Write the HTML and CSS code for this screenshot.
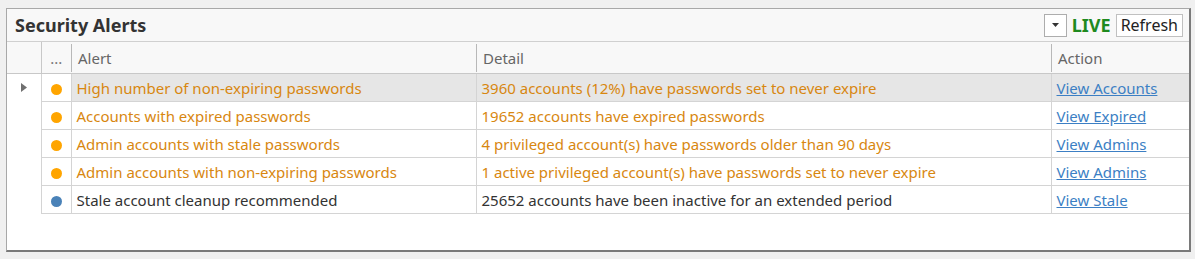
FILE: index.html
```html
<!DOCTYPE html>
<html>
<head>
<meta charset="utf-8">
<link rel="stylesheet" href="styles.css">
</head>
<body>
<div class="panel">
  <div class="titlebar">
    <div class="title">Security Alerts</div>
    <div class="tools">
      <button class="drop"><svg width="7" height="4" viewBox="0 0 7 4"><path d="M0 0H7L3.5 4Z" fill="#333"/></svg></button>
      <span class="live">LIVE</span>
      <button class="refresh">Refresh</button>
    </div>
  </div>
  <table class="grid">
    <colgroup>
      <col class="c-exp"><col class="c-st"><col class="c-alert"><col class="c-detail"><col class="c-action">
    </colgroup>
    <thead>
      <tr>
        <th class="exp"></th>
        <th class="st">...</th>
        <th><div class="th-in">Alert</div></th>
        <th><div class="th-in">Detail</div></th>
        <th><div class="th-in">Action</div></th>
      </tr>
    </thead>
    <tbody>
      <tr class="sel warn">
        <td class="exp"><svg width="6" height="9" viewBox="0 0 6 9"><path d="M0 0L6 4.5L0 9Z" fill="#707070"/></svg></td>
        <td class="st"><span class="dot orange"></span></td>
        <td>High number of non-expiring passwords</td>
        <td>3960 accounts (12%) have passwords set to never expire</td>
        <td><a href="#">View Accounts</a></td>
      </tr>
      <tr class="warn">
        <td class="exp"></td>
        <td class="st"><span class="dot orange"></span></td>
        <td>Accounts with expired passwords</td>
        <td>19652 accounts have expired passwords</td>
        <td><a href="#">View Expired</a></td>
      </tr>
      <tr class="warn">
        <td class="exp"></td>
        <td class="st"><span class="dot orange"></span></td>
        <td>Admin accounts with stale passwords</td>
        <td>4 privileged account(s) have passwords older than 90 days</td>
        <td><a href="#">View Admins</a></td>
      </tr>
      <tr class="warn">
        <td class="exp"></td>
        <td class="st"><span class="dot orange"></span></td>
        <td>Admin accounts with non-expiring passwords</td>
        <td>1 active privileged account(s) have passwords set to never expire</td>
        <td><a href="#">View Admins</a></td>
      </tr>
      <tr class="info">
        <td class="exp"></td>
        <td class="st"><span class="dot blue"></span></td>
        <td>Stale account cleanup recommended</td>
        <td>25652 accounts have been inactive for an extended period</td>
        <td><a href="#">View Stale</a></td>
      </tr>
    </tbody>
  </table>
</div>
</body>
</html>
```
FILE: styles.css
```css
html, body {
  margin: 0;
  padding: 0;
  background: #f0f0f0;
  font-family: "Noto Sans", "Open Sans", sans-serif;
}
.panel {
  margin: 8px 0 0 6px;
  width: 1182px;
  height: 241px;
  background: #fff;
  border-left: 1px solid #a8a8a8;
  border-top: 1px solid #a8a8a8;
  border-right: 2px solid #7a7a7a;
  border-bottom: 2px solid #7a7a7a;
}
.titlebar {
  height: 32px;
  display: flex;
  align-items: center;
  justify-content: space-between;
  padding: 0 6px 0 8px;
  background: #f8f8f8;
}
.title {
  font-weight: bold;
  font-size: 18px;
  color: #333;
}
.tools {
  display: flex;
  align-items: center;
  gap: 5px;
}
.drop {
  width: 23px;
  height: 23px;
  border: 1px solid #adadad;
  background: #fff;
  padding: 0;
  display: flex;
  align-items: center;
  justify-content: center;
}
.live {
  font-weight: bold;
  font-size: 18px;
  color: #1f8a1f;
}
.refresh {
  height: 23px;
  border: 1px solid #c0c0c0;
  background: #fff;
  font-family: inherit;
  font-size: 16px;
  line-height: 20px;
  color: #222;
  padding: 0 4px;
}
.grid {
  border-collapse: collapse;
  width: 1182px;
  table-layout: fixed;
  font-size: 15px;
}
.c-exp { width: 34px; }
.c-st { width: 30px; }
.c-alert { width: 405px; }
.c-detail { width: 575px; }
.c-action { width: 138px; }
thead th {
  height: 31px;
  background: #f8f8f8;
  border-top: 1px solid #d0d0d0;
  border-bottom: 1px solid #c8c8c8;
  padding: 0;
  font-weight: normal;
  text-align: left;
  color: #666;
}
thead th.st {
  border-left: 1px solid #c8c8c8;
  text-align: center;
  color: #777;
}
.th-in {
  border-left: 1px solid #b8b8b8;
  height: 28px;
  line-height: 28px;
  padding-left: 6px;
}
tbody td {
  height: 27px;
  padding: 0 0 0 5px;
  border: 1px solid #d4d4d4;
  white-space: nowrap;
  overflow: hidden;
}
tbody td:last-child { border-right: none; }
tbody td.exp {
  border: none;
  padding: 0 0 0 14px;
}
tbody td.exp svg { display: block; }
tbody td.st {
  padding: 0;
  text-align: center;
}
tr.sel td:not(.exp):not(.st) { background: #e6e6e6; }
tr.warn td { color: #d88710; }
tr.info td { color: #333; }
.dot {
  display: inline-block;
  width: 11px;
  height: 11px;
  border-radius: 50%;
  vertical-align: middle;
}
.orange { background: #ffa500; }
.blue { background: #4a82b8; }
td a {
  color: #3c7fc4;
  text-decoration: underline;
}
```
